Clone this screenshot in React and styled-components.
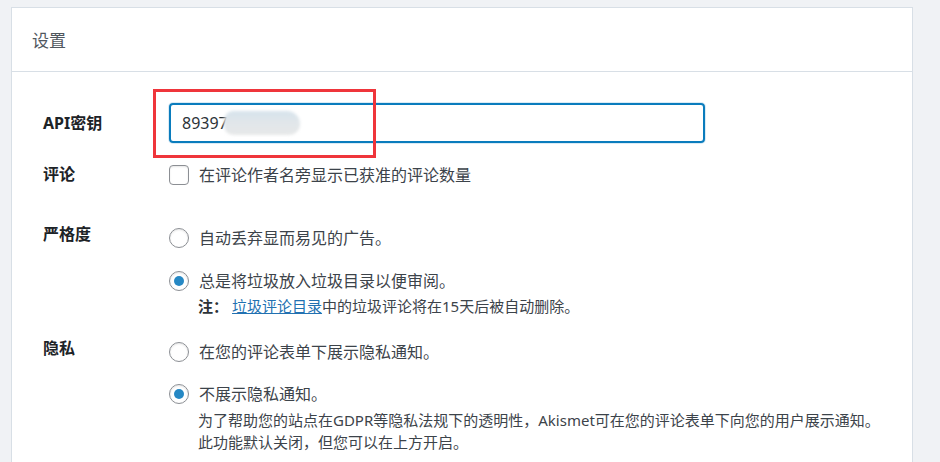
import React from "react";
import styled, { createGlobalStyle } from "styled-components";

const GlobalStyle = createGlobalStyle`
  html, body {
    margin: 0;
    padding: 0;
    background: #f0f2f5;
    font-family: "Noto Sans", "Noto Sans CJK SC", sans-serif;
    color: #3c434a;
  }
`;

const Page = styled.div`
  padding: 7px 0 0 11px;
  height: 455px;
  overflow: hidden;
`;

const Card = styled.div`
  width: 900px;
  background: #fff;
  border: 1px solid #d8dfe6;
  border-bottom: none;
  min-height: 460px;
`;

const CardHeader = styled.div`
  height: 63px;
  display: flex;
  align-items: center;
  padding-left: 20px;
  border-bottom: 1px solid #d8dfe6;
  font-size: 17px;
  color: #50575e;
`;

const CardBody = styled.div`
  padding: 31px 0 0 31px;
`;

const Row = styled.div`
  display: grid;
  grid-template-columns: 126px 1fr;
  align-items: ${(p) => (p.$center ? "center" : "start")};
  margin-top: ${(p) => p.$top || 0}px;
`;

const Label = styled.div`
  font-size: 16px;
  line-height: 20px;
  font-weight: 700;
  color: #1d2327;
  margin-top: ${(p) => p.$shift || 0}px;
`;

const Field = styled.div`
  position: relative;
  padding-top: ${(p) => p.$pad || 0}px;
`;

const KeyInput = styled.div`
  box-sizing: border-box;
  width: 536px;
  height: 40px;
  border: 2px solid #0a7cbd;
  border-radius: 4px;
  box-shadow: 0 0 0 1px rgba(10, 124, 189, 0.15);
  display: flex;
  align-items: center;
  padding-left: 11px;
  font-size: 16px;
  color: #2c3338;
`;

const Smudge = styled.span`
  display: inline-block;
  width: 76px;
  height: 24px;
  margin-left: -4px;
  border-radius: 10px 14px 12px 10px;
  background: linear-gradient(180deg, #d6e3ec 0%, #e0e6ea 45%, #e7e8e8 100%);
  filter: blur(1.5px);
`;

const Annotation = styled.div`
  position: absolute;
  left: -16px;
  top: -14px;
  width: 223px;
  height: 69px;
  box-sizing: border-box;
  border: 3px solid #ef353b;
  pointer-events: none;
`;

const Option = styled.label`
  display: flex;
  align-items: center;
  gap: 10px;
  font-size: 16px;
  line-height: 20px;
  margin-top: ${(p) => p.$top || 0}px;
`;

const Checkbox = styled.span`
  box-sizing: border-box;
  width: 20px;
  height: 20px;
  border: 1px solid #8c8f94;
  border-radius: 4px;
  background: #fff;
  box-shadow: inset 0 1px 2px rgba(0, 0, 0, 0.1);
  flex: none;
`;

const Radio = styled.span`
  box-sizing: border-box;
  width: 20px;
  height: 20px;
  border: 1px solid #8c8f94;
  border-radius: 50%;
  background: #fff;
  box-shadow: inset 0 1px 2px rgba(0, 0, 0, 0.1);
  flex: none;
  display: flex;
  align-items: center;
  justify-content: center;

  &::after {
    content: "";
    width: 10px;
    height: 10px;
    border-radius: 50%;
    background: #2688c4;
    display: ${(p) => (p.$checked ? "block" : "none")};
  }
`;

const Note = styled.p`
  margin: ${(p) => p.$top || 0}px 0 0 29px;
  font-size: 15px;
  line-height: 22px;
  color: #3c434a;

  strong {
    color: #2c3338;
    margin-right: 4px;
  }

  a {
    color: #2271b1;
    text-decoration: underline;
  }
`;

export default function App() {
  return (
    <Page>
      <GlobalStyle />
      <Card>
        <CardHeader>设置</CardHeader>
        <CardBody>
          <Row $center>
            <Label>API密钥</Label>
            <Field>
              <KeyInput>
                89397
                <Smudge />
              </KeyInput>
              <Annotation />
            </Field>
          </Row>

          <Row $center $top={22}>
            <Label $shift={-3}>评论</Label>
            <Field>
              <Option>
                <Checkbox />
                在评论作者名旁显示已获准的评论数量
              </Option>
            </Field>
          </Row>

          <Row $top={39}>
            <Label>严格度</Label>
            <Field $pad={4}>
              <Option>
                <Radio />
                自动丢弃显而易见的广告。
              </Option>
              <Option $top={23}>
                <Radio $checked />
                总是将垃圾放入垃圾目录以便审阅。
              </Option>
              <Note $top={4}>
                <strong>注：</strong>
                <a href="#spam">垃圾评论目录</a>中的垃圾评论将在15天后被自动删除。
              </Note>
            </Field>
          </Row>

          <Row $top={21}>
            <Label>隐私</Label>
            <Field $pad={4}>
              <Option>
                <Radio />
                在您的评论表单下展示隐私通知。
              </Option>
              <Option $top={22}>
                <Radio $checked />
                不展示隐私通知。
              </Option>
              <Note $top={5}>
                为了帮助您的站点在GDPR等隐私法规下的透明性，Akismet可在您的评论表单下向您的用户展示通知。
                <br />
                此功能默认关闭，但您可以在上方开启。
              </Note>
            </Field>
          </Row>
        </CardBody>
      </Card>
    </Page>
  );
}
